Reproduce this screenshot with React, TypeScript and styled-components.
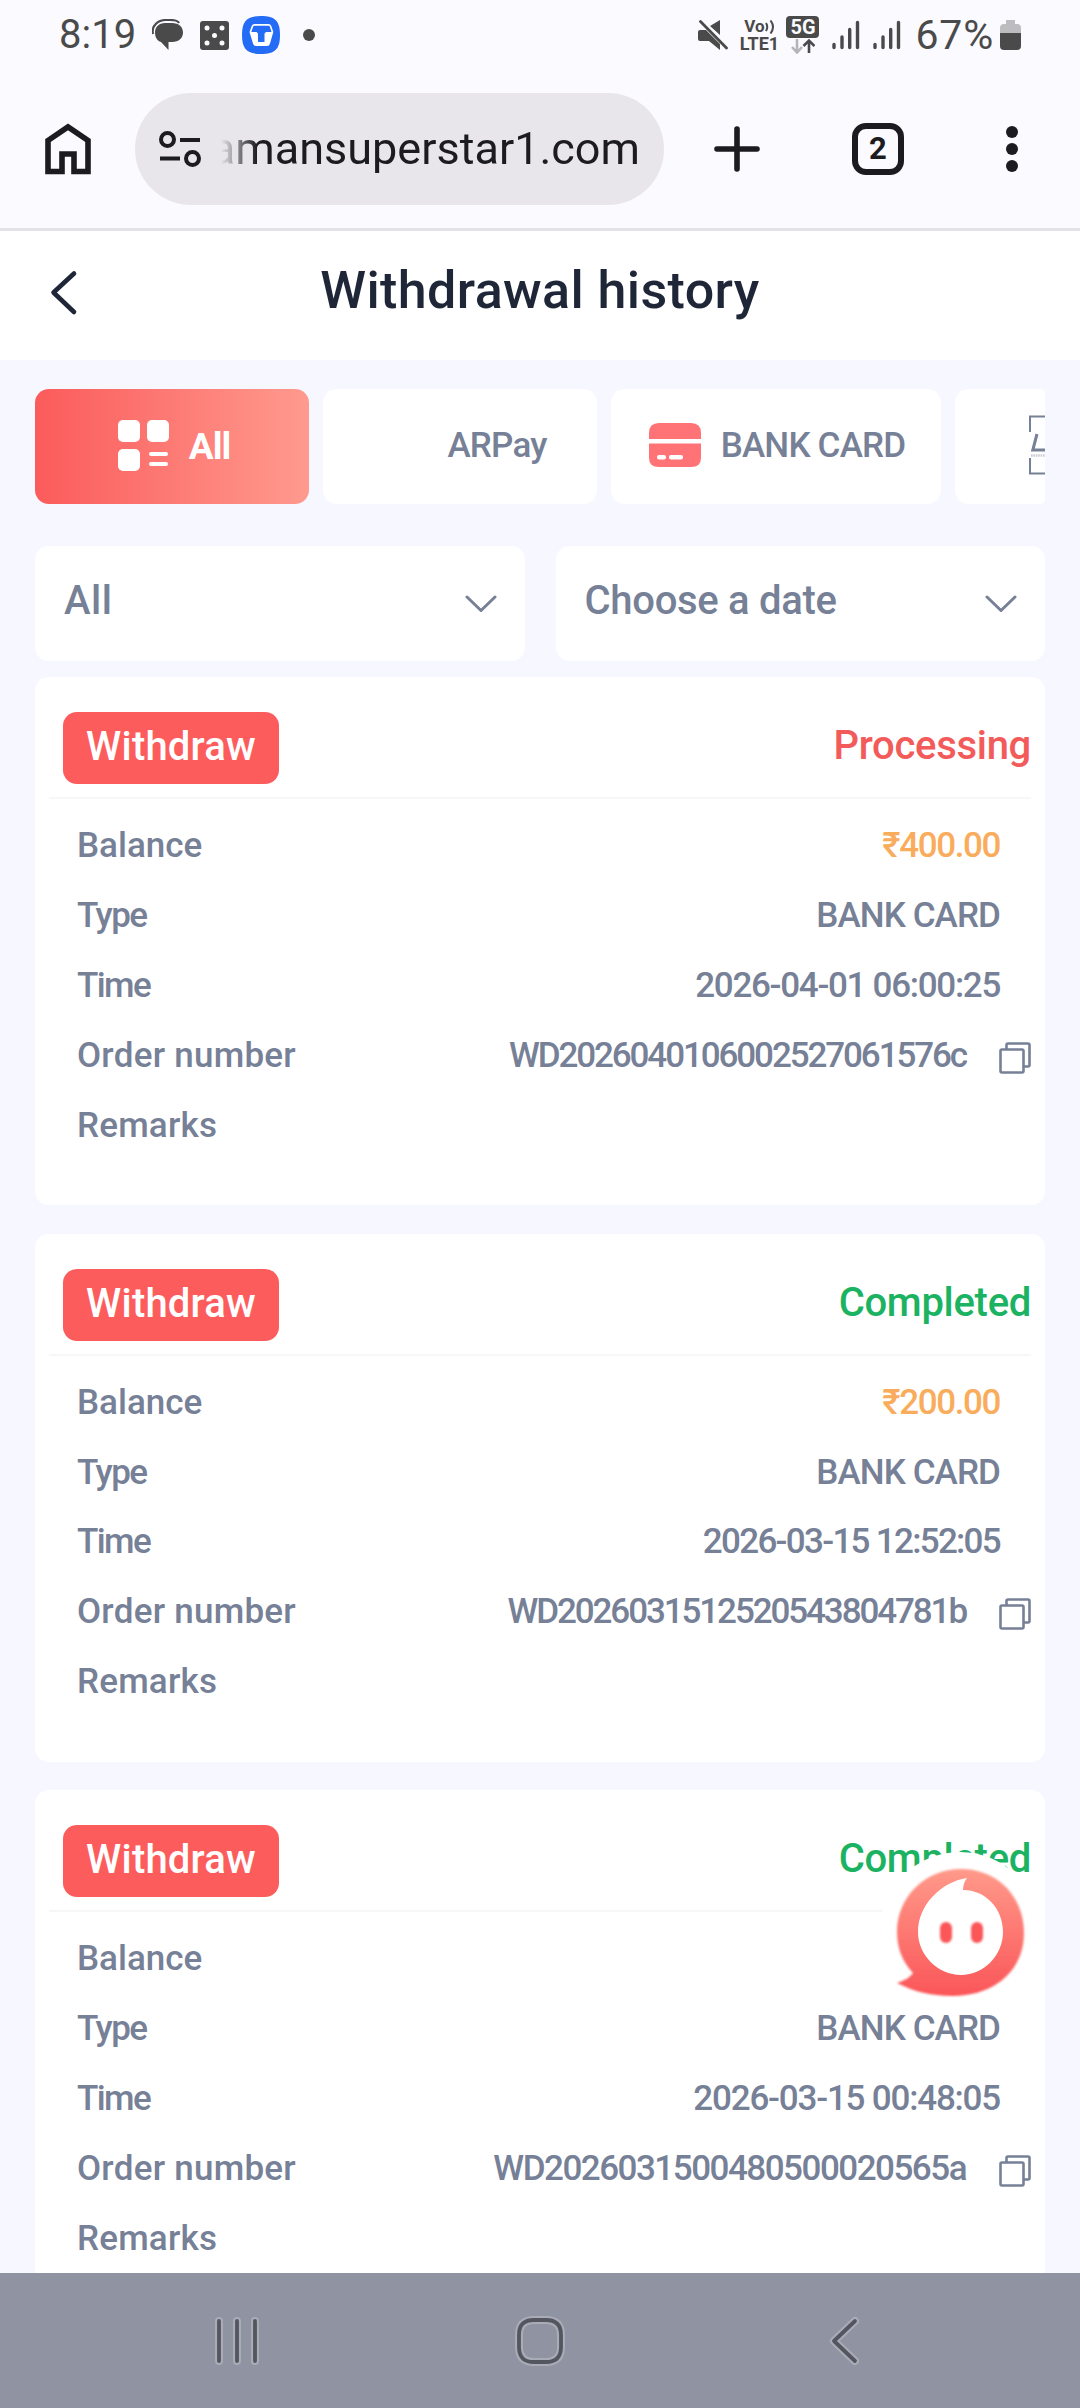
import React from "react";
import styled, { createGlobalStyle, css } from "styled-components";

const GlobalStyle = createGlobalStyle`
  *, *::before, *::after { box-sizing: border-box; }
  html, body { margin: 0; padding: 0; background: #f7f7ff; overflow: hidden; }
  body { font-family: Roboto, "Noto Sans", sans-serif; }
  svg { display: block; flex: none; }
`;

const Screen = styled.div`
  width: 1080px;
  height: 2408px;
  display: flex;
  flex-direction: column;
  overflow: hidden;
  background: #f7f7ff;
`;

const StatusBar = styled.div`
  height: 70px;
  padding: 0 59px;
  display: flex;
  align-items: center;
  justify-content: space-between;
  background: #fbfaff;
  color: #4a4a4a;
`;

const StatusGroup = styled.div`
  display: flex;
  align-items: center;
`;

const StatusText = styled.span<{ $size: number; $spacing: number }>`
  font-size: ${(p) => p.$size}px;
  line-height: 70px;
  letter-spacing: ${(p) => p.$spacing}px;
`;

const IconSlot = styled.span<{ $left: number }>`
  margin-left: ${(p) => p.$left}px;
  display: flex;
`;

const BrowserBar = styled.div`
  height: 161px;
  padding: 23px 0 0 42px;
  display: flex;
  align-items: flex-start;
  background: #fbfaff;
  border-bottom: 3px solid #e3e2e8;
`;

const BarButton = styled.div<{ $width: number }>`
  width: ${(p) => p.$width}px;
  height: 112px;
  display: flex;
  align-items: center;
  justify-content: center;
`;

const AddressPill = styled.div`
  width: 529px;
  height: 112px;
  margin-left: 41px;
  padding: 0 24px;
  display: flex;
  align-items: center;
  border-radius: 56px;
  background: #e8e6eb;
`;

const AddressText = styled.div`
  width: 420px;
  margin-left: 20px;
  display: flex;
  justify-content: flex-end;
  overflow: hidden;
  font-size: 45px;
  line-height: 60px;
  color: #1b1b20;
  mask-image: linear-gradient(90deg, transparent 0, #000 36px);
`;

const TitleBar = styled.header`
  height: 129px;
  padding: 0 48px;
  display: grid;
  grid-template-columns: 60px 1fr 60px;
  align-items: center;
  background: #fff;
`;

const BackButton = styled.div`
  padding-bottom: 6px;
`;

const Title = styled.h1`
  margin: 0;
  padding-bottom: 9px;
  text-align: center;
  font-size: 52px;
  font-weight: 500;
  line-height: 60px;
  letter-spacing: 0.4px;
  color: #1e2637;
`;

const Content = styled.main`
  flex: 1;
  min-height: 0;
  padding: 29px 35px 0;
  overflow: hidden;
`;

const Tabs = styled.div`
  display: flex;
  gap: 14px;
  overflow: hidden;
  border-radius: 5px;
`;

const Tab = styled.div<{ $active?: boolean; $width: number }>`
  flex: none;
  width: ${(p) => p.$width}px;
  height: 115px;
  padding: 0 0 3px 2px;
  display: flex;
  align-items: center;
  justify-content: center;
  gap: 20px;
  border-radius: 14px;
  font-size: 35px;
  font-weight: 500;
  letter-spacing: -0.8px;
  color: #768096;
  background: #fff;
  ${(p) =>
    p.$active &&
    css`
      padding: 0 0 1px 4px;
      gap: 19px;
      color: #fff;
      font-size: 37px;
      font-weight: 700;
      letter-spacing: -1px;
      background: linear-gradient(90deg, #fb5b5b, #ff9a8e);
    `}
`;

const IconTab = styled(Tab)`
  padding: 0 0 4px 74px;
  justify-content: flex-start;
`;

const EmptyIcon = styled.span`
  width: 52px;
  height: 52px;
`;

const Filters = styled.div`
  margin-top: 42px;
  display: grid;
  grid-template-columns: 1fr 1fr;
  gap: 31px;
`;

const Select = styled.div`
  height: 115px;
  padding: 0 28px 0 29px;
  display: flex;
  align-items: center;
  justify-content: space-between;
  border-radius: 14px;
  background: #fff;
  color: #768096;
`;

const SelectLabel = styled.span<{ $spacing: number }>`
  padding-bottom: 6px;
  font-size: 40px;
  font-weight: 500;
  line-height: 48px;
  letter-spacing: ${(p) => p.$spacing}px;
`;

const CardList = styled.div`
  margin-top: 16px;
  display: flex;
  flex-direction: column;
  gap: 28.5px;
`;

const Card = styled.section`
  flex: none;
  height: 528px;
  padding: 35px 14px 0;
  border-radius: 14px;
  background: #fff;
`;

const CardHead = styled.div`
  height: 90px;
  padding-left: 14px;
  display: flex;
  align-items: flex-start;
  justify-content: space-between;
  height: 87px;
  border-bottom: 2px solid #f6f7f8;
`;

const Badge = styled.span`
  width: 216px;
  height: 72px;
  padding-bottom: 3px;
  display: flex;
  align-items: center;
  justify-content: center;
  border-radius: 14px;
  background: #fd5c5c;
  color: #fff;
  font-size: 40px;
  font-weight: 500;
  letter-spacing: 0.2px;
`;

const Status = styled.span<{ $tone: "pending" | "done" }>`
  font-size: 40px;
  font-weight: 500;
  line-height: 68px;
  letter-spacing: -0.3px;
  color: ${(p) => (p.$tone === "pending" ? "#f35b5b" : "#1bb362")};
`;

const Rows = styled.div`
  padding-top: 12.5px;
`;

const Row = styled.div`
  height: 69.8px;
  padding: 0 31px 0 28px;
  display: flex;
  align-items: center;
  justify-content: space-between;
  font-size: 35px;
  font-weight: 500;
  line-height: 40px;
  color: #768096;
`;

const Label = styled.span<{ $spacing?: number }>`
  letter-spacing: ${(p) => p.$spacing ?? 0}px;
`;

const Value = styled.span<{ $spacing: number; $amount?: boolean }>`
  letter-spacing: ${(p) => p.$spacing}px;
  color: ${(p) => (p.$amount ? "#faac5d" : "inherit")};
`;

const OrderValue = styled.div`
  margin-right: -31px;
  display: flex;
  align-items: center;
  gap: 33px;
`;

const CopyButton = styled.span`
  padding-top: 4px;
`;

const ChatButton = styled.div`
  position: absolute;
  left: 880px;
  top: 1852px;
  width: 160px;
  height: 160px;
  border-radius: 50%;
  background: #fff;
`;

const NavBar = styled.nav`
  flex: none;
  height: 135px;
  padding: 0 206px 0 205px;
  display: flex;
  align-items: center;
  justify-content: space-between;
  background: #9093a2;
`;

const ChatBubbles = () => (
  <svg width="32" height="32" viewBox="0 0 32 32">
    <path d="M1 15C-1 7 6 1 14 1h4c5 0 8 1 9 3" fill="none" stroke="#4a4a4a" strokeWidth="2.200" />
    <path d="M13 4h7c7 0 11 4 11 9.500s-4 9.500-11 9.500h-3.500v8l-7.500-8C5 22 3 18 3 13.500 3 8 7 4 13 4Z" fill="#4a4a4a" />
  </svg>
);

const Dice = () => (
  <svg width="29" height="29" viewBox="0 0 29 29">
    <rect width="29" height="29" rx="3" fill="#4a4a4a" />
    {[[7, 7], [22, 7], [14.5, 14.5], [7, 22], [22, 22]].map(([x, y]) => (
      <circle key={`${x}-${y}`} cx={x} cy={y} r="2.500" fill="#fbfaff" />
    ))}
  </svg>
);

const BlueApp = () => (
  <svg width="38" height="38" viewBox="0 0 38 38">
    <path d="M19 0C33 0 38 5 38 19S33 38 19 38 0 33 0 19 5 0 19 0Z" fill="#246bf5" />
    <path d="M12.500 8h14q2 0 2.800 2l2 6-3.300 11.500q-.600 2.500-3 2.500H14q-2.400 0-3-2.500L7.500 16l2.200-6q.800-2 2.800-2Z" fill="#fff" />
    <path d="M12.500 9.800h14q1 0 1.400 1l1.600 5.200h-5.500l-1.500 1.500V26h-6.500v-8.500L14.500 16H9.300l1.800-5.200q.400-1 1.400-1Z" fill="#246bf5" />
  </svg>
);

const Dot = () => (
  <svg width="12" height="12" viewBox="0 0 12 12"><circle cx="6" cy="6" r="6" fill="#4a4a4a" /></svg>
);

const Muted = () => (
  <svg width="30" height="30" viewBox="0 0 30 30" fill="#4a4a4a">
    <path d="M0 12q0-2 2-2h6L22 24v6L11 21H2q-2 0-2-2ZM12 6l10-6v15Z" />
    <path d="M2.500 1.500 28.500 28" stroke="#4a4a4a" strokeWidth="2.800" strokeLinecap="round" />
  </svg>
);

const SmallLabel = styled.span`
  width: 38px;
  display: flex;
  flex-direction: column;
  align-items: center;
  font-size: 18px;
  font-weight: 700;
  line-height: 17px;
`;

const SoundLine = styled.span`
  display: flex;
  align-items: center;
  font-size: 17px;
`;

const NetworkColumn = styled.span`
  width: 33px;
  height: 39px;
  display: flex;
  flex-direction: column;
  align-items: center;
`;

const NetworkTag = styled.span`
  width: 33px;
  height: 22px;
  border-radius: 4px;
  background: #4a4a4a;
  color: #fbfaff;
  font-size: 20px;
  font-weight: 700;
  line-height: 23px;
  text-align: center;
`;

const Signal = () => (
  <svg width="28" height="30" viewBox="0 0 28 30" stroke="#4a4a4a" strokeWidth="3.400" strokeLinecap="round">
    <path d="M2 24.500v3M10 17v10.500M17.700 9.500v18M25.500 2.500v25" />
  </svg>
);

const Battery = () => (
  <svg width="21" height="32" viewBox="0 0 21 32">
    <path d="M6 1h9v4h2q4 0 4 4v6H0V9q0-4 4-4h2Z" fill="#bdbdbf" />
    <path d="M0 14h21v13q0 4-4 4H4q-4 0-4-4Z" fill="#4a4a4a" />
  </svg>
);

const HomeIcon = () => (
  <svg width="46" height="52" viewBox="0 0 46 52">
    <path d="M3 17.500 23 4l20 13.500v31H29V31H17v17.500H3Z" fill="none" stroke="#1b1b20" strokeWidth="5.600" />
  </svg>
);

const TuneIcon = () => (
  <svg width="42" height="36" viewBox="0 0 42 36" fill="none" stroke="#1b1b20" strokeWidth="4">
    <circle cx="8.500" cy="8.500" r="6.500" />
    <circle cx="33.500" cy="27.500" r="6.500" />
    <path d="M21 9h20M1 27.500h20" />
  </svg>
);

const PlusIcon = () => (
  <svg width="46" height="46" viewBox="0 0 46 46">
    <path d="M23 3v40M3 23h40" stroke="#1b1b20" strokeWidth="5.600" strokeLinecap="round" />
  </svg>
);

const TabCounter = styled.div`
  width: 52px;
  height: 52px;
  display: flex;
  align-items: center;
  justify-content: center;
  border: 6px solid #1b1b20;
  border-radius: 14px;
  font-size: 31px;
  font-weight: 700;
  line-height: 40px;
  color: #1b1b20;
`;

const MenuIcon = () => (
  <svg width="12" height="48" viewBox="0 0 12 48" fill="#1b1b20">
    <circle cx="6" cy="7" r="6" /><circle cx="6" cy="24" r="6" /><circle cx="6" cy="41" r="6" />
  </svg>
);

const BackIcon = () => (
  <svg width="30" height="46" viewBox="0 0 30 46">
    <path d="M26 3.500 5.500 22.500 26 42" fill="none" stroke="#1e2637" strokeWidth="4.600" strokeLinecap="round" strokeLinejoin="round" />
  </svg>
);

const GridIcon = () => (
  <svg width="52" height="52" viewBox="0 0 52 52" fill="#fff">
    <rect x="0" y="0" width="22" height="22" rx="5" />
    <rect x="29" y="0" width="22" height="22" rx="5" />
    <rect x="0" y="29" width="22" height="22" rx="5" />
    <rect x="31" y="32" width="19" height="4" rx="2" />
    <rect x="31" y="42" width="19" height="4" rx="2" />
  </svg>
);

const CardIcon = () => (
  <svg width="52" height="44" viewBox="0 0 52 44">
    <path d="M0 16V10Q0 0 10 0h32q10 0 10 10v6ZM0 20.500h52V35q0 9-10 9H10Q0 44 0 35Z" fill="#ff7275" />
    <rect x="8" y="32" width="9" height="4.500" rx="2" fill="#fff" />
    <rect x="20" y="32" width="14" height="4.500" rx="2" fill="#fff" />
  </svg>
);

const UpiIcon = () => (
  <svg width="60" height="60" viewBox="0 0 60 60" fill="none" stroke="#768096">
    <path d="M16 1.500H1V17M44 1.500h15V17M16 58.500H1V43M44 58.500h15V43" strokeWidth="2" />
    <path d="M8 19 3.800 35H22l4-16" strokeWidth="3" />
    <path d="M2 40.500h44" strokeWidth="2.400" strokeDasharray="1.600 .8" opacity=".4" />
  </svg>
);

const ChevronDown = () => (
  <svg width="32" height="18" viewBox="0 0 32 18">
    <path d="M2 2l14 13.500L30 2" fill="none" stroke="#768096" strokeWidth="3" strokeLinecap="round" strokeLinejoin="round" />
  </svg>
);

const CopyIcon = () => (
  <svg width="32" height="32" viewBox="0 0 32 32" fill="none" stroke="#768096" strokeWidth="2.600" strokeLinejoin="round">
    <rect x="1.500" y="7.500" width="23" height="23" rx="1.500" />
    <path d="M7.500 7.500V3q0-1.500 1.500-1.500h20q1.500 0 1.500 1.500v20q0 1.500-1.500 1.500h-4.500" />
  </svg>
);

const Mascot = () => (
  <svg width="160" height="160" viewBox="0 0 160 160">
    <defs>
      <linearGradient id="bubble" x1="0" y1="0" x2="0" y2="1">
        <stop offset="0" stopColor="#ff9a8a" />
        <stop offset="1" stopColor="#fb5659" />
      </linearGradient>
      <filter id="soft"><feGaussianBlur stdDeviation="1.200" /></filter>
    </defs>
    <path
      d="M81 17C117 17 144 44 144 81c0 38-30 63-71 63-24 0-40-5-56-13 9-3 13-6 16-10C22 109 17 96 17 80 17 45 45 17 81 17Z"
      fill="url(#bubble)"
      filter="url(#soft)"
    />
    <path d="M87 26c-3 4-4 8-4 12 23 0 40 19 40 42s-19 43-42 43-43-20-43-43c0-27 23-50 49-54Z" fill="#fff" />
    <g fill="#fb5659" filter="url(#soft)">
      <rect x="60" y="70" width="12" height="21" rx="6" />
      <rect x="91" y="70" width="12" height="21" rx="6" />
    </g>
  </svg>
);

const NavIcon = ({ width, path }: { width: number; path: string }) => (
  <svg width={width} height="50" viewBox={`0 0 ${width} 50`} fill="none" strokeLinecap="round" strokeLinejoin="round">
    <path d={path} stroke="#a9abb7" strokeWidth="8" />
    <path d={path} stroke="#53565f" strokeWidth="3.800" />
  </svg>
);

type Order = {
  status: string;
  tone: "pending" | "done";
  amount: string;
  time: string;
  timeSpacing: number;
  order: string;
  orderSpacing: number;
};

const orders: Order[] = [
  { status: "Processing", tone: "pending", amount: "₹400.00", time: "2026-04-01 06:00:25", timeSpacing: -1.3, order: "WD2026040106002527061576c", orderSpacing: -2.1 },
  { status: "Completed", tone: "done", amount: "₹200.00", time: "2026-03-15 12:52:05", timeSpacing: -1.7, order: "WD2026031512520543804781b", orderSpacing: -2.1 },
  { status: "Completed", tone: "done", amount: "", time: "2026-03-15 00:48:05", timeSpacing: -1.2, order: "WD2026031500480500020565a", orderSpacing: -1.5 },
];

const OrderCard = ({ item }: { item: Order }) => (
  <Card>
    <CardHead>
      <Badge>Withdraw</Badge>
      <Status $tone={item.tone}>{item.status}</Status>
    </CardHead>
    <Rows>
      <Row><Label>Balance</Label><Value $amount $spacing={-1.4}>{item.amount}</Value></Row>
      <Row><Label $spacing={-1.5}>Type</Label><Value $spacing={-0.9}>BANK CARD</Value></Row>
      <Row><Label $spacing={-1.6}>Time</Label><Value $spacing={item.timeSpacing}>{item.time}</Value></Row>
      <Row>
        <Label $spacing={0.25}>Order number</Label>
        <OrderValue>
          <Value $spacing={item.orderSpacing}>{item.order}</Value>
          <CopyButton><CopyIcon /></CopyButton>
        </OrderValue>
      </Row>
      <Row><Label $spacing={0.2}>Remarks</Label></Row>
    </Rows>
  </Card>
);

export default function App() {
  return (
    <Screen>
      <GlobalStyle />
      <StatusBar>
        <StatusGroup>
          <StatusText $size={40} $spacing={0}>8:19</StatusText>
          <IconSlot $left={16}><ChatBubbles /></IconSlot>
          <IconSlot $left={16}><Dice /></IconSlot>
          <IconSlot $left={13}><BlueApp /></IconSlot>
          <IconSlot $left={23}><Dot /></IconSlot>
        </StatusGroup>
        <StatusGroup>
          <Muted />
          <IconSlot $left={12}>
            <SmallLabel>
              <SoundLine>
                Vo
                <svg width="10" height="14" viewBox="0 0 10 14" fill="none" stroke="#4a4a4a" strokeWidth="2">
                  <path d="M1 3q2.500 4 0 8M5.500 0.500q5 6.500 0 13" />
                </svg>
              </SoundLine>
              <span>LTE1</span>
            </SmallLabel>
          </IconSlot>
          <IconSlot $left={8}>
            <NetworkColumn>
              <NetworkTag>5G</NetworkTag>
              <svg width="24" height="16" viewBox="0 0 24 16" fill="none" strokeWidth="2.600">
                <path d="M6 1v13M1 9l5 5.500L11 9" stroke="#b5b5b8" />
                <path d="M18 15V3M12.500 8 18 2.500 23.500 8" stroke="#4a4a4a" />
              </svg>
            </NetworkColumn>
          </IconSlot>
          <IconSlot $left={13}><Signal /></IconSlot>
          <IconSlot $left={13}><Signal /></IconSlot>
          <IconSlot $left={14}><StatusText $size={41} $spacing={0.8}>67%</StatusText></IconSlot>
          <IconSlot $left={6}><Battery /></IconSlot>
        </StatusGroup>
      </StatusBar>
      <BrowserBar>
        <BarButton $width={52}><HomeIcon /></BarButton>
        <AddressPill>
          <TuneIcon />
          <AddressText>amansuperstar1.com</AddressText>
        </AddressPill>
        <BarButton $width={146}><PlusIcon /></BarButton>
        <BarButton $width={136}><TabCounter>2</TabCounter></BarButton>
        <BarButton $width={132}><MenuIcon /></BarButton>
      </BrowserBar>
      <TitleBar>
        <BackButton><BackIcon /></BackButton>
        <Title>Withdrawal history</Title>
      </TitleBar>
      <Content>
        <Tabs>
          <Tab $active $width={274}><GridIcon />All</Tab>
          <Tab $width={274}><EmptyIcon />ARPay</Tab>
          <Tab $width={330}><CardIcon />BANK CARD</Tab>
          <IconTab $width={274}><UpiIcon /></IconTab>
        </Tabs>
        <Filters>
          <Select><SelectLabel $spacing={0.5}>All</SelectLabel><ChevronDown /></Select>
          <Select><SelectLabel $spacing={-0.3}>Choose a date</SelectLabel><ChevronDown /></Select>
        </Filters>
        <CardList>
          {orders.map((item) => <OrderCard key={item.order} item={item} />)}
        </CardList>
      </Content>
      <ChatButton><Mascot /></ChatButton>
      <NavBar>
        <NavIcon width={64} path="M14 5v40M32 5v40M50 5v40" />
        <NavIcon width={54} path="M19 4h12q15 0 15 15v12q0 15-15 15H19Q4 46 4 31V19Q4 4 19 4Z" />
        <NavIcon width={60} path="M41 5 20 25l21 20" />
      </NavBar>
    </Screen>
  );
}
